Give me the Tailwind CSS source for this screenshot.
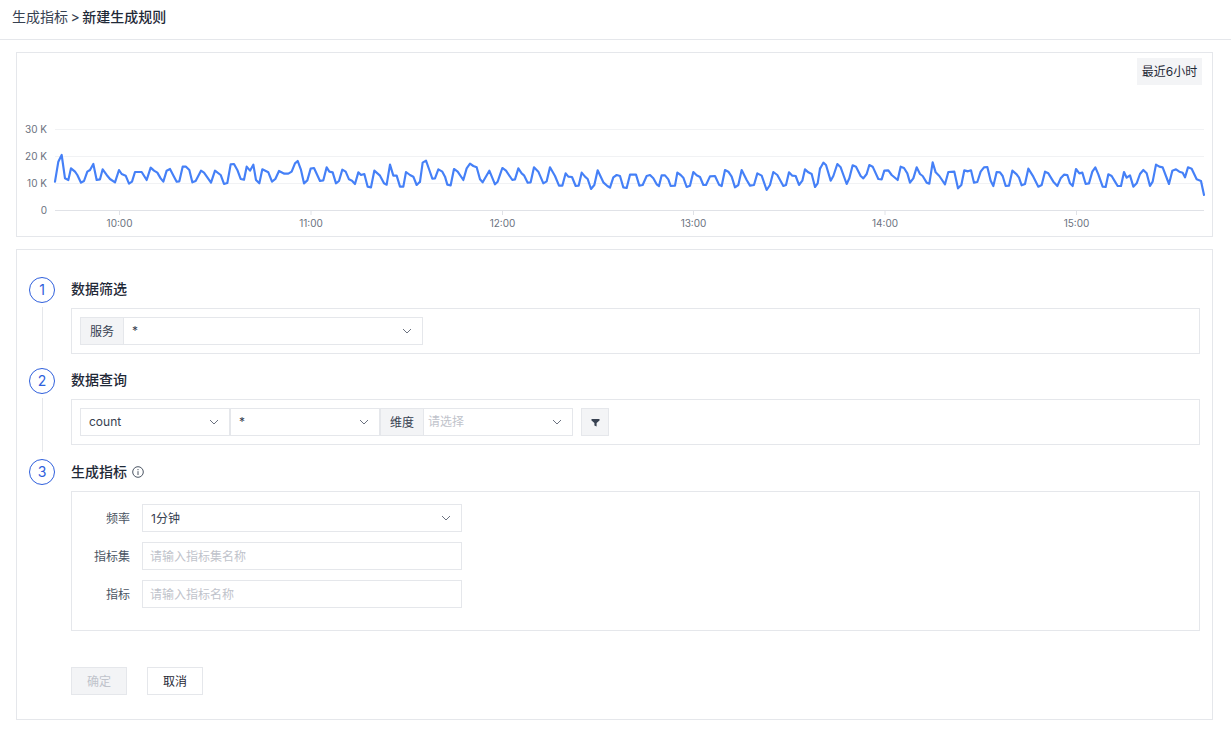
<!DOCTYPE html>
<html lang="zh">
<head>
    <meta charset="UTF-8">
    <title>新建生成规则</title>
    <script src="https://cdn.jsdelivr.net/npm/@tailwindcss/browser@4"></script>
</head>
<body class="bg-white text-[#374151] text-xs font-['Inter','Noto_Sans_CJK_SC',sans-serif]">
    <!-- Header -->
    <div class="h-10 flex items-center pl-3 pb-[5px] border-b border-[#e5e7eb] text-sm text-[#1f2937]">
        <span class="text-[#374151]">生成指标</span>
        <span class="mx-[2.5px] text-[#374151]">&gt;</span>
        <span class="font-medium">新建生成规则</span>
    </div>

    <div class="pl-4 pr-[18px] pt-3 flex flex-col gap-3">
        <!-- Chart card -->
        <div class="relative h-[185px] border border-[#e5e7eb]">
            <div class="absolute left-[1120px] top-[5px] w-[65px] h-[27px] pt-px flex items-center justify-center bg-[#f3f4f6] text-[#1f2937]">最近6小时</div>
            <svg class="absolute left-[-17px] top-[-53px]" width="1231" height="240" viewBox="0 0 1231 240" fill="none">
                <g stroke="#f1f2f4">
                    <path d="M55 129.5H1204M55 156.5H1204M55 183.5H1204"/>
                </g>
                <path d="M55 210.5H1204M119.5 210V215M311 210V215M502.5 210V215M693.5 210V215M885 210V215M1076.5 210V215" stroke="#e0e2e7"/>
                <g font-size="10" fill="#6b7280" text-anchor="end">
                    <text x="47" y="133">30 K</text>
                    <text x="47" y="160">20 K</text>
                    <text x="47" y="187">10 K</text>
                    <text x="47" y="214">0</text>
                </g>
                <g font-size="10" fill="#6b7280" text-anchor="middle">
                    <text x="119.5" y="227">10:00</text>
                    <text x="311" y="227">11:00</text>
                    <text x="502.5" y="227">12:00</text>
                    <text x="693.5" y="227">13:00</text>
                    <text x="885" y="227">14:00</text>
                    <text x="1076.5" y="227">15:00</text>
                </g>
                <g stroke="#4580f7" stroke-width="6.5" stroke-linejoin="round" stroke-linecap="round">
                    <polyline transform="scale(.33333)" points="165,545 175,485 185,465 195,535 205,540 213,505 225,515 232,525 243,548 252,543 262,515 270,510 280,492 290,540 300,538 308,508 320,525 330,537 345,547 357,510 365,522 377,527 387,551 396,545 405,516 425,516 440,540 452,503 462,512 472,518 482,535 490,545 500,512 510,507 522,530 530,545 538,544 548,500 558,500 568,510 577,547 587,543 603,512 612,518 633,548 645,512 662,525 672,552 682,549 692,493 702,492 712,510 722,537 732,539 740,500 750,512 760,494 768,540 778,550 787,508 805,517 816,545 826,537 837,513 853,521 865,521 875,515 885,490 893,483 903,510 912,550 922,541 932,506 942,504 960,543 970,541 980,502 988,515 998,517 1008,550 1017,543 1027,509 1037,515 1047,538 1056,542 1065,552 1075,517 1083,525 1093,522 1103,560 1113,562 1123,512 1140,527 1152,550 1160,554 1170,494 1180,527 1190,527 1200,560 1210,560 1218,516 1230,525 1240,530 1250,555 1260,545"/>
                    <polyline transform="translate(420 50) scale(.33333)" points="0,395 8,338 18,332 28,360 37,386 45,385 55,358 67,365 75,380 82,404 92,406 102,357 113,365 130,390 140,355 150,341 160,348 170,352 180,388 188,397 208,362 225,403 233,395 247,354 258,362 277,390 285,388 295,355 305,370 312,376 323,398 332,397 342,352 355,365 370,400 380,394 390,352 405,378 417,407 427,407 437,370 445,380 456,381 467,408 476,407 485,368 495,380 503,387 513,417 523,405 533,361 550,397 562,408 570,413 580,382 590,375 600,378 610,412 620,414 630,374 648,374 658,407 668,405 680,378 690,375 700,385 710,403 717,408 725,376 735,376 745,388 752,408 765,407 772,368 782,375 790,383 800,411 810,407 820,366 830,376 840,381 850,405 858,405 870,379 885,378 897,404 905,408 915,360 925,365 935,380 945,412 955,405 965,360 980,390 990,407 1002,405 1012,370 1025,377 1040,420 1050,405 1060,366 1072,375 1090,408 1098,405 1107,367 1117,377 1127,378 1137,405 1147,392 1155,358 1165,367 1175,372 1185,411 1193,400 1200,356"/>
                    <polyline transform="translate(820 50) scale(.33333)" points="0,356 10,338 18,345 32,392 40,378 52,342 62,352 80,402 88,385 98,346 108,350 122,378 130,385 140,372 148,345 158,350 175,387 185,388 193,362 205,361 215,375 233,390 242,350 252,354 262,370 270,398 280,385 290,352 300,372 308,378 320,398 328,401 338,337 347,367 358,378 375,403 385,366 403,365 414,415 424,405 433,361 444,364 453,361 462,398 472,396 482,365 492,352 502,351 512,392 520,408 530,366 540,367 548,378 557,408 567,407 577,362 590,373 597,383 605,406 615,402 625,356 640,380 655,410 665,405 675,365 685,370 700,395 712,408 722,385 732,374 742,375 750,400 758,408 768,357 778,370 787,368 797,402 807,400 817,365 826,352 835,373 848,410 857,411 865,373 875,378 885,395 893,408 903,408 912,366 920,383 930,376 940,410 950,400 960,372 970,360 980,370 990,408 998,395 1008,344 1018,350 1028,352 1047,402 1057,362 1068,358 1078,365 1088,368 1095,382 1104,352 1115,356 1130,388 1143,393 1152,435"/>
                </g>
            </svg>
        </div>

        <!-- Form card -->
        <div class="border border-[#e5e7eb] pt-[27px] pb-6 pl-3 pr-3">
            <!-- Step 1 -->
            <div class="flex gap-4 h-[91px]">
                <div class="w-[26px] flex flex-col items-center">
                    <div class="w-[26px] h-[26px] shrink-0 rounded-full border border-[#2f5fdc] text-[#2f5fdc] text-sm flex items-center justify-center">1</div>
                    <div class="w-px h-[54px] mt-1 bg-[#e5e7eb]"></div>
                </div>
                <div class="flex-1">
                    <div class="h-[26px] pb-[2px] flex items-center text-sm font-medium text-[#1f2937]">数据筛选</div>
                    <div class="mt-[5px] h-[46px] border border-[#e5e7eb] px-2 flex items-center">
                        <div class="flex w-[343px] h-7 border border-[#e5e7eb]">
                            <div class="w-[43px] pt-[2px] bg-[#f3f4f6] border-r border-[#e5e7eb] flex items-center justify-center">服务</div>
                            <div class="flex-1 flex items-center justify-between pl-2 pr-[10px]">
                                <span>*</span>
                                <svg width="10" height="6" viewBox="0 0 10 6" fill="none" stroke="#6b7280"><path d="M1 1l4 4 4-4"/></svg>
                            </div>
                        </div>
                    </div>
                </div>
            </div>

            <!-- Step 2 -->
            <div class="flex gap-4 h-[91px]">
                <div class="w-[26px] flex flex-col items-center">
                    <div class="w-[26px] h-[26px] shrink-0 rounded-full border border-[#2f5fdc] text-[#2f5fdc] text-sm flex items-center justify-center">2</div>
                    <div class="w-px h-[54px] mt-1 bg-[#e5e7eb]"></div>
                </div>
                <div class="flex-1">
                    <div class="h-[26px] pb-[2px] flex items-center text-sm font-medium text-[#1f2937]">数据查询</div>
                    <div class="mt-[5px] h-[46px] border border-[#e5e7eb] px-2 flex items-center">
                        <div class="w-[150px] h-7 border border-[#e5e7eb] flex items-center justify-between pl-2 pr-[10px]">
                            <span>count</span>
                            <svg width="10" height="6" viewBox="0 0 10 6" fill="none" stroke="#6b7280"><path d="M1 1l4 4 4-4"/></svg>
                        </div>
                        <div class="w-[150px] h-7 border border-[#e5e7eb] flex items-center justify-between pl-2 pr-[10px]">
                            <span>*</span>
                            <svg width="10" height="6" viewBox="0 0 10 6" fill="none" stroke="#6b7280"><path d="M1 1l4 4 4-4"/></svg>
                        </div>
                        <div class="flex w-[193px] h-7 border border-[#e5e7eb]">
                            <div class="w-[43px] pt-[2px] bg-[#f3f4f6] border-r border-[#e5e7eb] flex items-center justify-center">维度</div>
                            <div class="flex-1 flex items-center justify-between pl-1 pr-[10px]">
                                <span class="text-[#bfc3cb]">请选择</span>
                                <svg width="10" height="6" viewBox="0 0 10 6" fill="none" stroke="#6b7280"><path d="M1 1l4 4 4-4"/></svg>
                            </div>
                        </div>
                        <div class="ml-2 w-7 h-7 bg-[#f3f4f6] border border-[#e5e7eb] flex items-center justify-center">
                            <svg width="9" height="9" viewBox="0 0 9 9" fill="#374151"><path d="M0.5 1H8.5V2.4L5.6 5V8.6L3.4 7.6V5L0.5 2.4Z"/></svg>
                        </div>
                    </div>
                </div>
            </div>

            <!-- Step 3 -->
            <div class="flex gap-4">
                <div class="w-[26px]">
                    <div class="w-[26px] h-[26px] rounded-full border border-[#2f5fdc] text-[#2f5fdc] text-sm flex items-center justify-center">3</div>
                </div>
                <div class="flex-1">
                    <div class="h-[26px] flex items-center gap-[5px] text-sm font-medium text-[#1f2937]">
                        <span>生成指标</span>
                        <svg width="12" height="12" viewBox="0 0 12 12" fill="none" stroke="#4b5563"><circle cx="6" cy="6" r="5.3"/><path d="M6 5.2V9M6 3V4.2"/></svg>
                    </div>
                    <div class="mt-[6px] h-[140px] border border-[#e5e7eb] pt-3 flex flex-col gap-[10px]">
                        <div class="flex items-center">
                            <label class="w-[58px] pt-[2px] text-right text-[#4b5563]">频率</label>
                            <div class="ml-3 w-[320px] h-7 border border-[#e5e7eb] flex items-center justify-between pl-2 pr-[10px]">
                                <span class="pt-[2px]">1分钟</span>
                                <svg width="10" height="6" viewBox="0 0 10 6" fill="none" stroke="#6b7280"><path d="M1 1l4 4 4-4"/></svg>
                            </div>
                        </div>
                        <div class="flex items-center">
                            <label class="w-[58px] pt-[2px] text-right text-[#4b5563]">指标集</label>
                            <div class="ml-3 w-[320px] h-7 pt-[2px] border border-[#e5e7eb] flex items-center pl-[7px] text-[#bfc3cb]">请输入指标集名称</div>
                        </div>
                        <div class="flex items-center">
                            <label class="w-[58px] pt-[2px] text-right text-[#4b5563]">指标</label>
                            <div class="ml-3 w-[320px] h-7 pt-[2px] border border-[#e5e7eb] flex items-center pl-[7px] text-[#bfc3cb]">请输入指标名称</div>
                        </div>
                    </div>
                    <div class="mt-9 flex gap-5">
                        <button class="w-14 h-7 pt-[2px] bg-[#f3f4f6] border border-[#e5e7eb] text-[#bfc3cb]">确定</button>
                        <button class="w-14 h-7 pt-[2px] bg-white border border-[#e5e7eb] text-[#1f2937]">取消</button>
                    </div>
                </div>
            </div>
        </div>
    </div>
</body>
</html>
